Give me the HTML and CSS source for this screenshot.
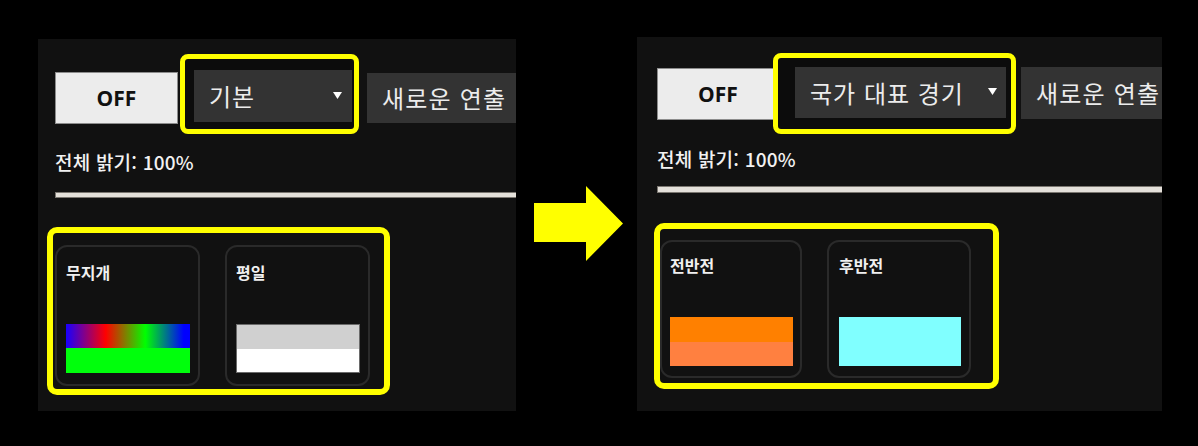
FILE: index.html
```html
<!DOCTYPE html>
<html lang="ko">
<head>
<meta charset="utf-8">
<title>연출 변경</title>
<link rel="stylesheet" href="styles.css">
</head>
<body>
<div class="stage">
  <section class="panel panel-before">
    <div class="toolbar">
      <div class="btn-off">OFF</div>
      <div class="mark mark-select">
        <div class="select"><span>기본</span><svg class="caret" viewBox="0 0 9 7"><polygon points="0,0 9,0 4.5,7" fill="#ffffff"/></svg></div>
      </div>
      <div class="btn-new">새로운 연출</div>
    </div>
    <div class="bright">전체 밝기: 100%</div>
    <div class="slider"></div>
    <div class="mark mark-cards">
      <div class="card">
        <div class="card-title">무지개</div>
        <div class="swatch"><div class="sw-top rainbow"></div><div class="sw-bottom green"></div></div>
      </div>
      <div class="card">
        <div class="card-title">평일</div>
        <div class="swatch swatch-framed"><div class="sw-top grey"></div><div class="sw-bottom white"></div></div>
      </div>
    </div>
  </section>

  <svg class="arrow" viewBox="0 0 89 75"><path d="M0 17 H52 V0 L89 37.5 L52 75 V56 H0 Z" fill="#ffff00"/></svg>

  <section class="panel panel-after">
    <div class="toolbar">
      <div class="btn-off">OFF</div>
      <div class="mark mark-select">
        <div class="select"><span>국가 대표 경기</span><svg class="caret" viewBox="0 0 9 7"><polygon points="0,0 9,0 4.5,7" fill="#ffffff"/></svg></div>
      </div>
      <div class="btn-new">새로운 연출</div>
    </div>
    <div class="bright">전체 밝기: 100%</div>
    <div class="slider"></div>
    <div class="mark mark-cards">
      <div class="card">
        <div class="card-title">전반전</div>
        <div class="swatch"><div class="sw-top orange"></div><div class="sw-bottom orange-light"></div></div>
      </div>
      <div class="card">
        <div class="card-title">후반전</div>
        <div class="swatch"><div class="sw-top cyan"></div><div class="sw-bottom cyan"></div></div>
      </div>
    </div>
  </section>
</div>
</body>
</html>
```

FILE: styles.css
```css
* { box-sizing: border-box; }

html, body {
  margin: 0;
  background: #000;
}

body {
  width: 1198px;
  height: 446px;
  overflow: hidden;
  font-family: "Noto Sans CJK KR", "Noto Sans", sans-serif;
  color: #f0f0f0;
}

.stage {
  display: flex;
  align-items: flex-start;
  padding-left: 38px;
}

.panel {
  flex: none;
  background: #111111;
  overflow: hidden;
  display: flex;
  flex-direction: column;
  align-items: flex-start;
}

.panel-before {
  width: 478px;
  height: 372px;
  margin-top: 39px;
  padding: 15px 0 0 17px;
}

.panel-after {
  width: 525px;
  height: 374px;
  margin-top: 37px;
  margin-left: 14px;
  padding: 16px 0 0 20px;
}

.arrow {
  flex: none;
  width: 89px;
  height: 75px;
  margin-left: 18px;
  margin-top: 186px;
}

/* toolbar */
.toolbar {
  display: flex;
  align-items: flex-start;
}

.btn-off {
  flex: none;
  height: 52px;
  display: flex;
  align-items: center;
  justify-content: center;
  background: #ececec;
  border: 1px solid #8c8c8c;
  color: #111;
  font-family: "Open Sans", "Noto Sans", sans-serif;
  font-weight: 700;
  font-size: 21px;
}

.panel-before .btn-off { width: 123px; margin-top: 18px; }
.panel-after .btn-off { width: 122px; margin-top: 15px; }

.mark {
  flex: none;
  border: 5px solid #ffff00;
  border-radius: 8px;
  background: #0c0c0c;
}

.panel-before .mark-select {
  margin-left: 2px;
  padding: 11px 2px 7px 9px;
}

.panel-after .mark-select {
  margin-left: -6px;
  padding: 9px 5px 11px 17px;
}

.select {
  display: flex;
  align-items: center;
  justify-content: space-between;
  background: #333333;
  color: #ececec;
  font-size: 24px;
  letter-spacing: 1px;
  line-height: 30px;
  white-space: nowrap;
  padding: 0 10px 0 15px;
}

.panel-before .select { width: 158px; height: 52px; }
.panel-after .select { width: 211px; height: 51px; padding-right: 9px; }

.caret {
  width: 9px;
  height: 7px;
  flex: none;
  margin-bottom: 2px;
}

.btn-new {
  flex: none;
  display: flex;
  align-items: center;
  background: #333333;
  color: #ececec;
  font-size: 24px;
  letter-spacing: 1.2px;
  line-height: 30px;
  white-space: nowrap;
  padding: 0 15px;
}

.panel-before .btn-new { height: 50px; margin-left: 8px; margin-top: 19px; }
.panel-after .btn-new { height: 52px; margin-left: 5px; margin-top: 14px; }

/* brightness */
.bright {
  font-size: 19px;
  font-weight: 500;
  line-height: 24px;
  letter-spacing: 0.2px;
  color: #f2f2f2;
  white-space: nowrap;
}

.panel-before .bright { margin-top: 16px; }
.panel-after .bright { margin-top: 13px; }

.slider {
  align-self: stretch;
  background: #e4e0da;
  border: 1px solid #7a7670;
  border-right: 0;
}

.panel-before .slider { height: 6px; margin-top: 18px; }
.panel-after .slider { height: 7px; margin-top: 15px; }

/* cards */
.mark-cards {
  display: flex;
  gap: 25px;
  border-width: 6px;
  border-radius: 10px;
  background: #111111;
}

.panel-before .mark-cards {
  margin-top: 29px;
  margin-left: -8px;
  padding: 12px 14px 3px 2px;
}

.panel-after .mark-cards {
  margin-top: 30px;
  margin-left: -3px;
  padding: 11px 22px 5px 0;
}

.card {
  display: flex;
  flex-direction: column;
  border: 2px solid #2a2a2a;
  border-radius: 12px;
  background: #111111;
}

.panel-before .card {
  width: 145px;
  height: 141px;
  padding: 14px 8px 11px 9px;
}

.panel-after .card {
  width: 142px;
  height: 138px;
  padding: 12px 7px 10px 8px;
}

.panel-after .card + .card { width: 144px; padding-left: 10px; }

.card-title {
  font-size: 16px;
  font-weight: 700;
  line-height: 22px;
  color: #f0f0f0;
}

.swatch {
  margin-top: auto;
  display: flex;
  flex-direction: column;
  height: 49px;
}

.panel-before .swatch { width: 124px; }
.panel-after .swatch { width: 123px; }
.panel-after .card + .card .swatch { width: 122px; }

.swatch-framed { border: 1px solid #6a6a6a; }

.sw-top { height: 24px; flex: none; }
.panel-after .sw-top { height: 25px; }
.sw-bottom { flex: 1; }

.rainbow { background: linear-gradient(to right, #1800ff 0%, #ff0000 32%, #00ff00 64%, #0000ff 95%); }
.green { background: #00ff0c; }
.grey { background: #d0d0d0; }
.white { background: #ffffff; }
.orange { background: #ff8000; }
.orange-light { background: #ff8040; }
.cyan { background: #80ffff; }
```
